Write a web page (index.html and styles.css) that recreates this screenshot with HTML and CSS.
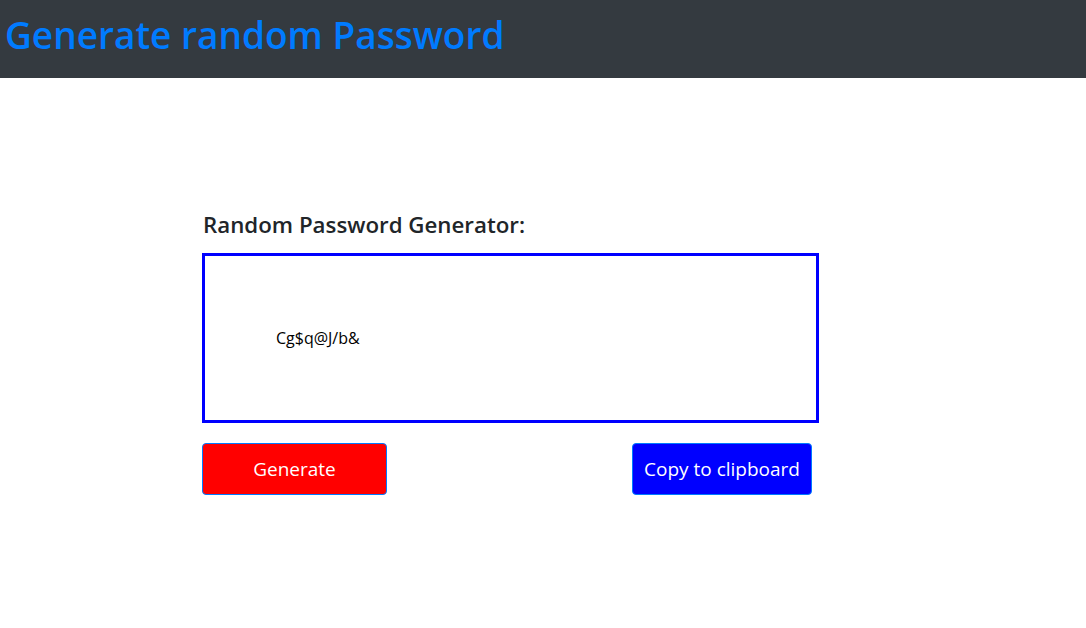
FILE: index.html
```html
<!DOCTYPE html>
<html>
<head>
<meta charset="utf-8">
<link rel="stylesheet" href="styles.css">
</head>
<body>
<header class="topbar">
  <h1 class="title">Generate random Password</h1>
</header>
<main class="main">
  <section class="card">
    <h4 class="label">Random Password Generator:</h4>
    <div class="output"><span class="pw">Cg$q@J/b&amp;</span></div>
    <div class="actions">
      <button class="btn btn-gen">Generate</button>
      <button class="btn btn-copy">Copy to clipboard</button>
    </div>
  </section>
</main>
</body>
</html>
```
FILE: styles.css
```css
* { box-sizing: border-box; }
body {
  margin: 0;
  font-family: "Open Sans", "Noto Sans", sans-serif;
  color: #212529;
  background: #fff;
}
.topbar {
  background: #343a40;
  height: 78px;
  display: flex;
  align-items: center;
  padding-left: 5px;
  padding-bottom: 8px;
}
.title {
  margin: 0;
  color: #007bff;
  font-size: 37px;
  font-weight: 600;
  line-height: 1.2;
}
.main {
  padding-top: 134px;
  padding-left: 202px;
}
.card {
  width: 617px;
}
.label {
  margin: 0 0 14px 1px;
  font-size: 22.3px;
  font-weight: 600;
  line-height: 1.2;
  color: #212529;
}
.output {
  height: 170px;
  border: 3px solid #0000ff;
  display: flex;
  align-items: center;
  padding-left: 71px;
}
.pw {
  font-size: 16px;
  color: #000;
}
.actions {
  display: flex;
  justify-content: space-between;
  margin-top: 20px;
  padding-right: 7px;
}
.btn {
  height: 52px;
  border: 1px solid #007bff;
  border-radius: 4px;
  color: #fff;
  font-family: inherit;
  font-size: 19px;
  cursor: pointer;
}
.btn-gen {
  width: 185px;
  background: #ff0000;
}
.btn-copy {
  width: 180px;
  background: #0000ff;
}
```
